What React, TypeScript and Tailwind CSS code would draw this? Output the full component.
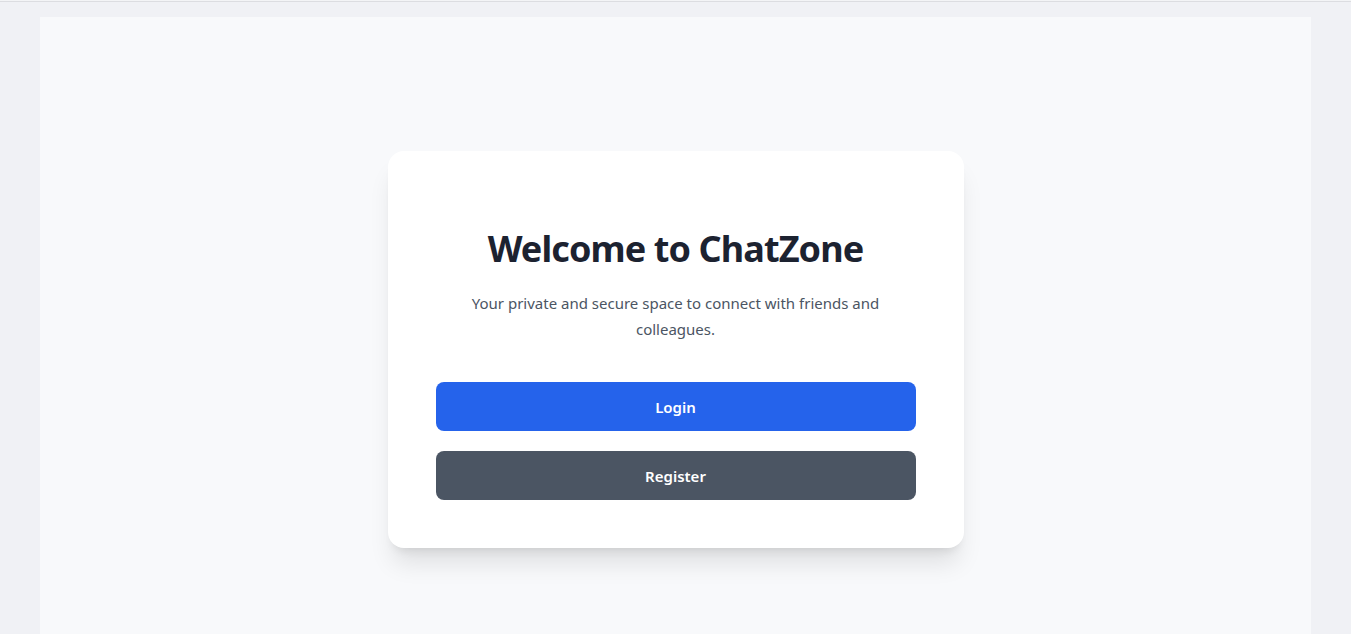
export default function App() {
  return (
    <div className="min-h-screen bg-[#f0f1f5]" style={{ fontFamily: '"Noto Sans", "Open Sans", sans-serif' }}>
      <div className="h-px bg-[#f3f4f6]" />
      <div className="h-px bg-[#dcdde1]" />
      <div className="px-10 pt-[15px]">
        <div className="bg-[#f8f9fb] min-h-[640px] flex justify-center pt-[134px]">
          <div className="w-[576px] h-[397px] bg-white rounded-2xl shadow-xl px-12 pt-[78px] pb-12 flex flex-col items-center">
            <h1 className="text-4xl leading-10 font-bold text-[#1c2230] text-center tracking-tight">Welcome to ChatZone</h1>
            <p className="mt-[21px] max-w-[430px] text-[15px] leading-[26px] text-[#4b5563] text-center">
              Your private and secure space to connect with friends and colleagues.
            </p>
            <div className="mt-10 w-full flex flex-col gap-5">
              <button className="w-full h-[49px] pt-[2px] rounded-lg bg-[#2563eb] text-white text-[15px] font-semibold">Login</button>
              <button className="w-full h-[49px] pt-[2px] rounded-lg bg-[#4b5563] text-white text-[15px] font-semibold">Register</button>
            </div>
          </div>
        </div>
      </div>
    </div>
  );
}
